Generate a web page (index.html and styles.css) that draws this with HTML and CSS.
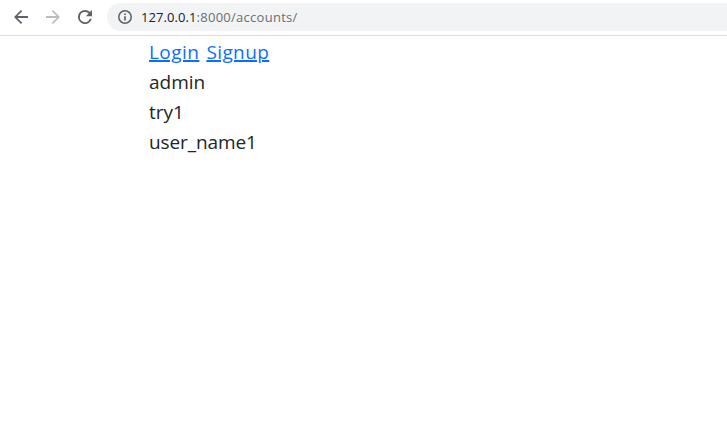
FILE: index.html
```html
<!DOCTYPE html>
<html lang="en">
<head>
<meta charset="utf-8">
<title>Accounts</title>
<link rel="stylesheet" href="styles.css">
</head>
<body>
<header class="toolbar">
  <nav class="controls">
    <svg class="icon" viewBox="4 4 16 16"><path d="M20 10.85H7.9l5.5-5.45L12 4l-8 8 8 8 1.4-1.4-5.5-5.45H20z"/></svg>
    <svg class="icon disabled" viewBox="4 4 16 16"><path d="M4 10.85h12.1l-5.5-5.45L12 4l8 8-8 8-1.4-1.4 5.5-5.45H4z"/></svg>
    <svg class="icon" viewBox="4 4 16 16"><path d="M17.65 6.35A7.96 7.96 0 0 0 12 4a8 8 0 1 0 7.73 10h-2.3A5.8 5.8 0 1 1 12 6.2c1.6 0 3 .6 4.05 1.75L13 11h7V4l-2.35 2.35z"/></svg>
  </nav>
  <div class="address">
    <svg class="info" viewBox="2 2 20 20"><path d="M10.8 7h2.4v2.2h-2.4zm0 3.8h2.4V17h-2.4zM12 2a10 10 0 1 0 0 20 10 10 0 0 0 0-20zm0 17.8a7.8 7.8 0 1 1 0-15.6 7.8 7.8 0 0 1 0 15.6z"/></svg>
    <span class="url"><span class="host">127.0.0.1</span>:8000/accounts/</span>
  </div>
</header>
<main class="container">
  <div class="links"><a href="#">Login</a><a href="#" class="signup">Signup</a></div>
  <div>admin</div>
  <div>try1</div>
  <div class="user">user_name1</div>
</main>
</body>
</html>
```
FILE: styles.css
```css
* { box-sizing: border-box; }
body { margin: 0; background: #fff; color: #212529; font-family: "Open Sans", "Noto Sans", sans-serif; }
.toolbar { display: flex; align-items: flex-start; height: 36px; padding-top: 3px; border-bottom: 1px solid #dadce0; overflow: hidden; }
.controls { display: flex; align-items: center; gap: 18px; width: 107px; height: 28px; padding-left: 14px; }
.icon { width: 14px; height: 14px; fill: #5f6368; flex: none; }
.disabled { fill: #babcbe; }
.address { display: flex; align-items: center; flex: 1; height: 28px; padding-left: 11px; background: #f1f3f4; border-radius: 14px 0 0 14px; }
.info { width: 14px; height: 14px; fill: #5f6368; margin-right: 9px; }
.url { font-size: 13px; line-height: 28px; color: #6b6f73; letter-spacing: 0.27px; white-space: nowrap; }
.host { color: #202124; letter-spacing: 0.08px; }
.container { padding: 1px 0 0 149px; font-size: 19px; line-height: 30px; }
.links { display: flex; gap: 7px; }
a { color: #0d6efd; text-decoration: underline; text-decoration-thickness: 2px; text-underline-offset: 1px; text-decoration-skip-ink: auto; letter-spacing: 0.45px; }
.signup { letter-spacing: 0.4px; }
.user { letter-spacing: -0.1px; }
```
